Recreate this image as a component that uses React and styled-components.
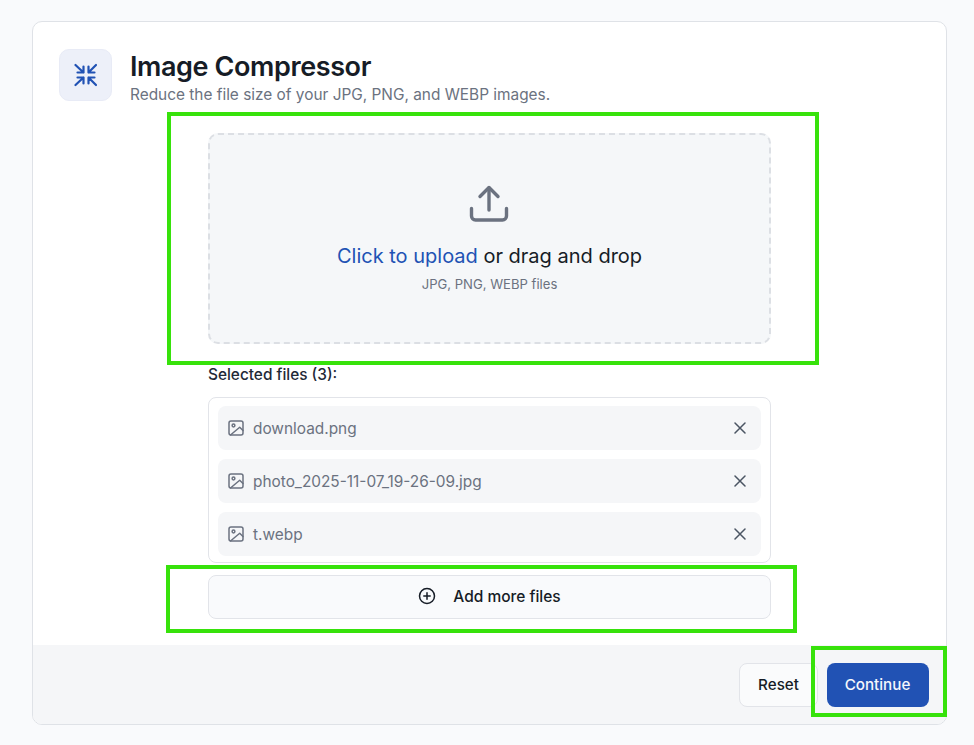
import React from "react";
import styled, { createGlobalStyle } from "styled-components";

const Global = createGlobalStyle`
  html, body { margin: 0; padding: 0; background: #f9fafc; }
  * { box-sizing: border-box; }
  body { font-family: Inter, "Noto Sans", sans-serif; color: #111827; }
`;

const Page = styled.div`
  position: relative;
  width: 974px;
  height: 745px;
  padding: 21px 27px 20px 32px;
`;
const Card = styled.main`
  height: 704px;
  background: #fff;
  border: 1px solid #dfe2e7;
  border-radius: 10px;
  overflow: hidden;
  display: flex;
  flex-direction: column;
`;
const Header = styled.header`
  display: flex;
  gap: 18px;
  padding: 27px 25px 0 26px;
  height: 111px;
`;
const IconTile = styled.div`
  width: 53px;
  height: 52px;
  border-radius: 10px;
  background: #edf0f9;
  border: 1px solid #e8ebf6;
  display: flex;
  align-items: center;
  justify-content: center;
  color: #2152b4;
`;
const HeadText = styled.div`
  display: flex;
  flex-direction: column;
  padding-top: 1px;
`;
const Title = styled.h1`
  margin: 0;
  font-size: 27px;
  line-height: 34px;
  font-weight: 600;
  letter-spacing: -0.4px;
  color: #161c26;
`;
const Subtitle = styled.p`
  margin: 1px 0 0;
  font-size: 15.4px;
  line-height: 20px;
  color: #6b7280;
`;
const Content = styled.div`
  flex: 1;
  width: 563px;
  margin-left: 175px;
`;
const Dropzone = styled.div`
  height: 211px;
  border: 2px dashed #dcdfe4;
  border-radius: 10px;
  background: #f5f7f9;
  display: flex;
  flex-direction: column;
  align-items: center;
  color: #6b7280;
  padding-top: 49px;
`;
const UploadGlyph = styled.div`
  height: 40px;
  margin-right: 2px;
`;
const DropTitle = styled.div`
  margin-top: 18px;
  font-size: 20px;
  line-height: 28px;
  color: #161c26;
`;
const Link = styled.span`
  color: #2152b4;
`;
const DropHint = styled.div`
  margin-top: 4px;
  font-size: 13.1px;
  line-height: 20px;
  color: #6b7280;
`;
const SelectedLabel = styled.div`
  margin-top: 21px;
  font-size: 15.4px;
  line-height: 20px;
  font-weight: 450;
  color: #1f2937;
`;
const FileList = styled.ul`
  list-style: none;
  margin: 12px 0 0;
  height: 166px;
  padding: 8px 9px 0;
  border: 1px solid #e2e4e9;
  border-radius: 8px;
  display: flex;
  flex-direction: column;
  gap: 9px;
  overflow: hidden;
`;
const FileRow = styled.li`
  flex: none;
  height: 44px;
  border-radius: 8px;
  background: #f5f6f8;
  display: flex;
  align-items: center;
  padding: 0 15px 0 9px;
  gap: 8px;
  color: #6b7280;
`;
const FileName = styled.span`
  flex: 1;
  font-size: 15.4px;
  color: #6b7280;
`;
const AddButton = styled.button`
  margin-top: 12px;
  width: 100%;
  height: 44px;
  padding: 0 0 2px;
  border: 1px solid #e2e4e9;
  border-radius: 8px;
  background: #f9fafc;
  display: flex;
  align-items: center;
  justify-content: center;
  gap: 17px;
  font: 450 15.5px Inter, sans-serif;
  color: #161c26;
`;
const Footer = styled.footer`
  height: 79px;
  background: #f5f6f8;
  display: flex;
  justify-content: flex-end;
  align-items: flex-start;
  gap: 9px;
  padding: 18px 17px 0 0;
`;
const Reset = styled.button`
  width: 79px;
  height: 44px;
  padding: 0 0 2px;
  border: 1px solid #e2e4e9;
  border-radius: 8px;
  background: #fafbfc;
  font: 450 15.2px Inter, sans-serif;
  color: #161c26;
`;
const Continue = styled.button`
  width: 102px;
  height: 44px;
  padding: 0 1px 2px 0;
  border: none;
  border-radius: 8px;
  background: #2152b4;
  font: 550 15.2px Inter, sans-serif;
  color: #f5f7fc;
`;
const Highlight = styled.div`
  position: absolute;
  left: ${(p) => p.$x}px;
  top: ${(p) => p.$y}px;
  width: ${(p) => p.$w}px;
  height: ${(p) => p.$h}px;
  border: 4px solid #37e20b;
  pointer-events: none;
`;

const CompressIcon = () => (
  <svg width="24" height="24" viewBox="0 0 24 24" fill="none" stroke="currentColor" strokeWidth="2.2" strokeLinecap="round" strokeLinejoin="round">
    <path d="M1.5 2l8 7.5M9.5 3.5v6h-6" />
    <path d="M22 2l-7.5 7.5M14.5 3.5v6h6" />
    <path d="M1.5 22l8-7.5M9.5 20.5v-6h-6" />
    <path d="M22 22l-7.5-7.5M14.5 20.5v-6h6" />
  </svg>
);

const UploadIcon = () => (
  <svg width="40" height="40" viewBox="0 0 40 40" fill="none" stroke="currentColor" strokeWidth="3.4" strokeLinecap="round" strokeLinejoin="round">
    <path d="M20 26V4" />
    <path d="M11 12.5 20 3.5l9 9" />
    <path d="M2.5 24.5v7.5a4 4 0 0 0 4 4h27a4 4 0 0 0 4-4v-7.5" />
  </svg>
);

const ImageIcon = () => (
  <svg width="18" height="18" viewBox="0 0 18 18" fill="none" stroke="currentColor" strokeWidth="1.5" strokeLinecap="round" strokeLinejoin="round">
    <rect x="2" y="2" width="14" height="14" rx="2" />
    <circle cx="6.5" cy="6.5" r="1.4" />
    <path d="M16 11.5 12.7 8.2 3.5 16" />
  </svg>
);

const CloseIcon = () => (
  <svg width="12" height="12" viewBox="0 0 12 12" fill="none" stroke="#4b5563" strokeWidth="1.5" strokeLinecap="round">
    <path d="M1 1l10 10M11 1 1 11" />
  </svg>
);

const PlusIcon = () => (
  <svg width="18" height="18" viewBox="0 0 18 18" fill="none" stroke="#161c26" strokeWidth="1.5" strokeLinecap="round">
    <circle cx="9" cy="9" r="7.5" />
    <path d="M9 5.8v6.4M5.8 9h6.4" />
  </svg>
);

const files = ["download.png", "photo_2025-11-07_19-26-09.jpg", "t.webp"];

export default function App() {
  return (
    <Page>
      <Global />
      <Card>
        <Header>
          <IconTile>
            <CompressIcon />
          </IconTile>
          <HeadText>
            <Title>Image Compressor</Title>
            <Subtitle>Reduce the file size of your JPG, PNG, and WEBP images.</Subtitle>
          </HeadText>
        </Header>
        <Content>
          <Dropzone>
            <UploadGlyph>
              <UploadIcon />
            </UploadGlyph>
            <DropTitle>
              <Link>Click to upload</Link> or drag and drop
            </DropTitle>
            <DropHint>JPG, PNG, WEBP files</DropHint>
          </Dropzone>
          <SelectedLabel>Selected files (3):</SelectedLabel>
          <FileList>
            {files.map((f) => (
              <FileRow key={f}>
                <ImageIcon />
                <FileName>{f}</FileName>
                <CloseIcon />
              </FileRow>
            ))}
          </FileList>
          <AddButton>
            <PlusIcon />
            Add more files
          </AddButton>
        </Content>
        <Footer>
          <Reset>Reset</Reset>
          <Continue>Continue</Continue>
        </Footer>
      </Card>
      <Highlight $x={167} $y={112} $w={652} $h={253} />
      <Highlight $x={166} $y={565} $w={631} $h={68} />
      <Highlight $x={811} $y={646} $w={136} $h={71} />
    </Page>
  );
}
